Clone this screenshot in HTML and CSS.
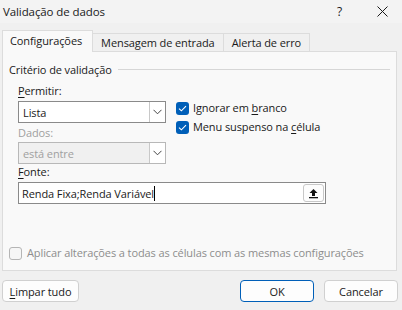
FILE: index.html
```html
<html>
    <head>
        <title>Validação de dados</title>
        <link rel="stylesheet" href="styles.css">
    </head>
    <body>
        <div class="janela">
            <header class="titulo">
                <span class="titulo-texto">Validação de dados</span>
                <span class="ajuda">?</span>
                <span class="fechar">
                    <svg width="11" height="11" viewBox="0 0 11 11">
                        <path d="M0.5 0.5 L10.5 10.5 M10.5 0.5 L0.5 10.5" stroke="#1a1a1a" stroke-width="1" fill="none"/>
                    </svg>
                </span>
            </header>

            <div class="abas">
                <div class="aba ativa">Configurações</div>
                <div class="aba">Mensagem de entrada</div>
                <div class="aba">Alerta de erro</div>
            </div>

            <div class="painel">
                <div class="grupo-titulo">
                    <span>Critério de validação</span>
                    <span class="linha"></span>
                </div>

                <div class="campos">
                    <div class="linha-topo">
                        <div class="coluna">
                            <label class="rotulo"><u>P</u>ermitir:</label>
                            <div class="caixa">
                                <span class="valor">Lista</span>
                                <span class="seta">
                                    <svg width="9" height="6" viewBox="0 0 9 6"><path d="M0.5 0.8 L4.5 4.8 L8.5 0.8" stroke="#444" stroke-width="1" fill="none"/></svg>
                                </span>
                            </div>
                            <label class="rotulo desativado">Dados:</label>
                            <div class="caixa caixa-desativada">
                                <span class="valor">está entre</span>
                                <span class="seta">
                                    <svg width="9" height="6" viewBox="0 0 9 6"><path d="M0.5 0.8 L4.5 4.8 L8.5 0.8" stroke="#444" stroke-width="1" fill="none"/></svg>
                                </span>
                            </div>
                        </div>
                        <div class="opcoes">
                            <div class="opcao">
                                <span class="marca">
                                    <svg width="9" height="7" viewBox="0 0 9 7"><path d="M1 3.6 L3.4 5.8 L8 1.2" stroke="#fff" stroke-width="1.1" fill="none"/></svg>
                                </span>
                                <span>Ignorar em <u>b</u>ranco</span>
                            </div>
                            <div class="opcao">
                                <span class="marca">
                                    <svg width="9" height="7" viewBox="0 0 9 7"><path d="M1 3.6 L3.4 5.8 L8 1.2" stroke="#fff" stroke-width="1.1" fill="none"/></svg>
                                </span>
                                <span>Menu suspenso na <u>c</u>élula</span>
                            </div>
                        </div>
                    </div>

                    <label class="rotulo"><u>F</u>onte:</label>
                    <div class="fonte">
                        <span class="valor">Renda Fixa;Renda Variável</span><span class="cursor"></span>
                        <span class="recolher">
                            <svg width="11" height="11" viewBox="0 0 11 11">
                                <path d="M5.5 1 L1.5 5 L4 5 L4 8 L7 8 L7 5 L9.5 5 Z" fill="#111"/>
                                <rect x="1" y="9" width="9" height="1.3" fill="#111"/>
                            </svg>
                        </span>
                    </div>
                </div>

                <div class="aplicar">
                    <span class="marca-vazia"></span>
                    <span>Aplicar alterações a todas as células com as mesmas configurações</span>
                </div>
            </div>

            <div class="rodape">
                <button class="botao"><u>L</u>impar tudo</button>
                <span class="espaco"></span>
                <button class="botao principal">OK</button>
                <button class="botao">Cancelar</button>
            </div>
        </div>
    </body>
</html>
```

FILE: styles.css
```css
body {
    margin: 0;
    font-family: "Open Sans", "Noto Sans", sans-serif;
    font-size: 11px;
    letter-spacing: -0.1px;
    color: #1a1a1a;
    background: #f0f0f0;
}
u {
    text-underline-offset: 2px;
}
.janela {
    width: 402px;
    height: 310px;
    display: flex;
    flex-direction: column;
}
.titulo {
    height: 23px;
    flex-shrink: 0;
    background: #f3f3f3;
    display: flex;
    align-items: center;
    padding-left: 3px;
}
.titulo-texto {
    flex: 1;
    line-height: 16px;
    font-size: 11.5px;
}
.ajuda {
    width: 10px;
    margin-right: 30px;
    font-size: 12px;
}
.fechar {
    display: flex;
    margin-right: 14px;
}
.abas {
    display: flex;
    align-items: flex-end;
    height: 28px;
    flex-shrink: 0;
    margin-left: 2px;
}
.aba {
    height: 17px;
    line-height: 17px;
    padding: 0 8px;
    border: 1px solid #dcdcdc;
    border-bottom: none;
    border-left: none;
    background: #f0f0f0;
}
.aba.ativa {
    height: 21px;
    line-height: 20px;
    padding: 0 10px 0 7px;
    border-left: 1px solid #dcdcdc;
    background: #f9f9f9;
    margin-bottom: -1px;
    position: relative;
    z-index: 1;
}
.painel {
    box-sizing: border-box;
    height: 220px;
    flex-shrink: 0;
    margin: 0 5px 0 2px;
    border: 1px solid #dcdcdc;
    background: #f9f9f9;
    display: flex;
    flex-direction: column;
    padding: 10px 6px 9px 6px;
}
.grupo-titulo {
    display: flex;
    align-items: center;
    gap: 6px;
    line-height: 16px;
}
.grupo-titulo .linha {
    flex: 1;
    height: 1px;
    background: #d6d6d6;
    margin-top: -2px;
}
.campos {
    padding-left: 9px;
    margin-top: 5px;
}
.linha-topo {
    display: flex;
    gap: 10px;
}
.coluna {
    width: 148px;
    display: flex;
    flex-direction: column;
}
.rotulo {
    display: block;
    line-height: 16px;
    margin-bottom: 2px;
}
.rotulo.desativado {
    color: #a0a0a0;
    margin-top: 2px;
    margin-bottom: 1px;
}
.caixa {
    height: 22px;
    box-sizing: border-box;
    border: 1px solid #8a8a8a;
    background: #ffffff;
    display: flex;
    align-items: center;
}
.caixa .valor {
    flex: 1;
    padding-left: 4px;
}
.caixa .seta {
    width: 16px;
    height: 20px;
    box-sizing: border-box;
    border-left: 1px solid #c8c8c8;
    display: flex;
    align-items: center;
    justify-content: center;
}
.caixa-desativada {
    background: #f0f0f0;
    border-color: #b8b8b8;
    color: #a0a0a0;
}
.caixa-desativada .seta {
    background: #ffffff;
}
.opcoes {
    display: flex;
    flex-direction: column;
    gap: 3px;
    padding-top: 17px;
}
.opcao {
    display: flex;
    align-items: center;
    gap: 4px;
    line-height: 16px;
}
.marca {
    width: 13px;
    height: 13px;
    border-radius: 3px;
    background: #005fb8;
    display: flex;
    align-items: center;
    justify-content: center;
}
.fonte {
    width: 308px;
    height: 22px;
    box-sizing: border-box;
    border: 1px solid #8a8a8a;
    background: #ffffff;
    display: flex;
    align-items: center;
    padding-left: 3px;
}
.fonte .cursor {
    width: 1px;
    height: 15px;
    background: #000;
}
.recolher {
    margin-left: auto;
    margin-right: 1px;
    width: 21px;
    height: 18px;
    box-sizing: border-box;
    border: 1px solid #c8c8c8;
    border-radius: 3px;
    background: #fdfdfd;
    display: flex;
    align-items: center;
    justify-content: center;
}
.aplicar {
    margin-top: auto;
    display: flex;
    align-items: center;
    gap: 5px;
    color: #8d8d8d;
    line-height: 16px;
}
.marca-vazia {
    width: 13px;
    height: 13px;
    box-sizing: border-box;
    border: 1px solid #b5b5b5;
    border-radius: 3px;
    background: #f6f6f6;
}
.rodape {
    display: flex;
    align-items: center;
    padding: 9px 4px 0 2px;
    gap: 10px;
}
.espaco {
    flex: 1;
}
.botao {
    height: 22px;
    width: 74px;
    font-family: "Open Sans", "Noto Sans", sans-serif;
    font-size: 11px;
    letter-spacing: -0.1px;
    color: #1a1a1a;
    background: #fdfdfd;
    border: 1px solid #d0d0d0;
    border-radius: 4px;
    padding: 0;
}
.botao:first-child {
    width: 77px;
}
.botao.principal {
    border-color: #005fb8;
}
```
